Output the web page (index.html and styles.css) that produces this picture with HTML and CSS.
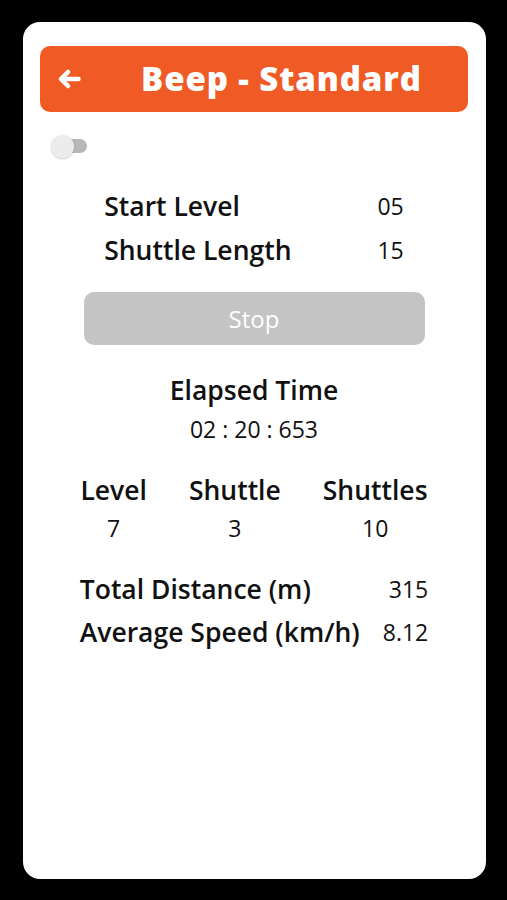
FILE: index.html
```html
<!DOCTYPE html>
<html lang="en">
<head>
    <meta charset="UTF-8">
    <meta name="viewport" content="width=device-width, initial-scale=1.0">
    <title>Beep - Standard</title>
    <link rel="stylesheet" href="styles.css">
</head>
<body>
    <div class="screen">
        <div class="header">
            <span class="back">
                <svg width="24" height="20" viewBox="0 0 24 20">
                    <path d="M21.5 10H4.5M11 3L4 10l7 7" fill="none" stroke="#fff" stroke-width="4.5" stroke-linecap="round" stroke-linejoin="round"/>
                </svg>
            </span>
            <h1>Beep - Standard</h1>
        </div>

        <div class="toggle-row">
            <div class="toggle"><span class="thumb"></span></div>
        </div>

        <table class="settings">
            <tr><th>Start Level</th><td>05</td></tr>
            <tr><th>Shuttle Length</th><td>15</td></tr>
        </table>

        <button class="stop" disabled>Stop</button>

        <div class="elapsed">
            <h2>Elapsed Time</h2>
            <p>02 : 20 : 653</p>
        </div>

        <table class="stats">
            <tr><th>Level</th><th>Shuttle</th><th>Shuttles</th></tr>
            <tr><td>7</td><td>3</td><td>10</td></tr>
        </table>

        <table class="totals">
            <tr><th>Total Distance (m)</th><td>315</td></tr>
            <tr><th>Average Speed (km/h)</th><td>8.12</td></tr>
        </table>
    </div>
</body>
</html>
```

FILE: styles.css
```css
* {
    margin: 0;
    padding: 0;
    box-sizing: border-box;
    font-family: "Open Sans", sans-serif;
}

body {
    background: #000;
    color: #111;
    width: 507px;
    height: 900px;
    padding: 22px 21px 21px 23px;
}

.screen {
    background: #fff;
    height: 857px;
    border-radius: 17px;
    padding: 24px 18px 0 17px;
}

.header {
    display: flex;
    align-items: center;
    height: 66px;
    background: #f05a24;
    border-radius: 10px;
    padding-left: 17px;
}

.back {
    display: flex;
    width: 24px;
    height: 20px;
}

.header h1 {
    color: #fff;
    font-size: 33px;
    font-weight: 800;
    margin-left: 60px;
    letter-spacing: 0.9px;
    line-height: 40px;
}

.toggle-row {
    padding: 23px 0 0 11px;
    height: 72px;
}

.toggle {
    position: relative;
    width: 36px;
    height: 23px;
}

.toggle::before {
    content: "";
    position: absolute;
    left: 11px;
    top: 4px;
    width: 25px;
    height: 14px;
    border-radius: 7px;
    background: #b8b8b8;
}

.thumb {
    position: absolute;
    left: 0;
    top: 0;
    width: 23px;
    height: 23px;
    border-radius: 50%;
    background: #ececec;
    box-shadow: 0 1px 2px rgba(0, 0, 0, 0.2);
}

table {
    border-collapse: collapse;
    margin: 0 auto;
}

th {
    font-weight: 600;
    font-size: 26.5px;
    text-align: left;
    white-space: nowrap;
}

td {
    font-size: 23px;
    text-align: right;
}

.settings th, .settings td {
    height: 44px;
}

.settings td {
    padding-left: 86px;
}

.stop {
    display: block;
    width: 341px;
    height: 53px;
    margin: 20px auto 0;
    border: none;
    border-radius: 10px;
    background: #c4c4c4;
    color: #fff;
    font-size: 24px;
}

.elapsed {
    text-align: center;
    margin-top: 27px;
}

.elapsed h2 {
    font-size: 26.5px;
    font-weight: 600;
    line-height: 36px;
}

.elapsed p {
    font-size: 23px;
    line-height: 42px;
}

.stats {
    margin-top: 22px;
}

.stats th, .stats td {
    text-align: center;
    padding: 0 21px;
}

.stats th {
    height: 36px;
}

.stats td {
    height: 40px;
}

.totals {
    margin-top: 19px;
}

.totals th, .totals td {
    height: 43px;
}

.totals td {
    padding-left: 23px;
}
```
